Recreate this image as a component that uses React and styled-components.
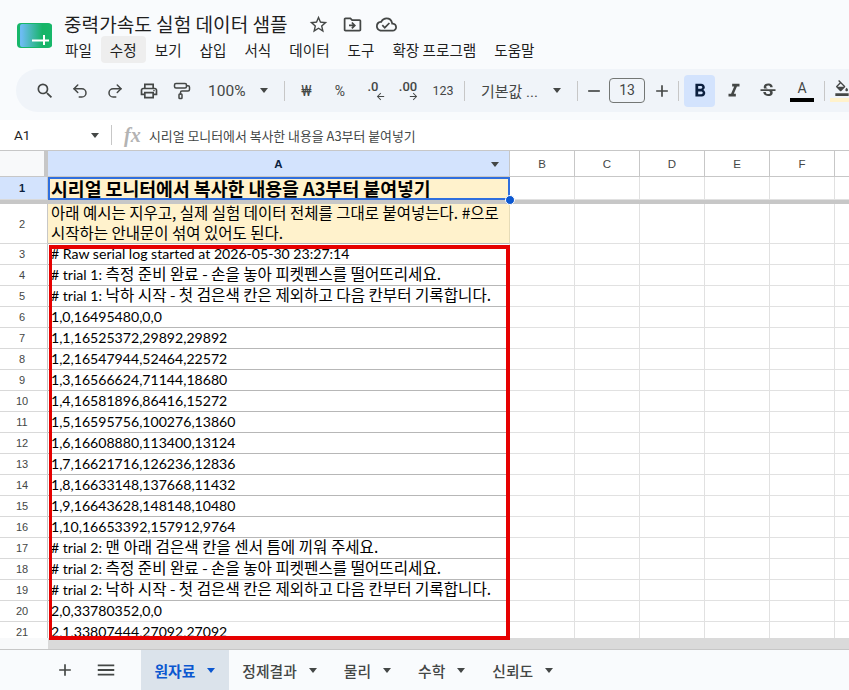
import React from "react";
import styled, { createGlobalStyle } from "styled-components";
import {
  MdSearch,
  MdOutlineLocalPrintshop,
  MdStarBorder,
  MdOutlineDriveFileMove,
  MdOutlineCloudDone,
  MdAdd,
  MdRemove,
  MdMenu,
  MdFormatBold,
  MdFormatItalic,
  MdStrikethroughS,
  MdFormatColorFill,
  MdArrowBack,
  MdArrowForward,
} from "react-icons/md";
import { Undo2, Redo2, PaintRoller } from "lucide-react";

const GlobalStyle = createGlobalStyle`
  html, body {
    margin: 0;
    padding: 0;
    height: 100%;
    overflow: hidden;
    background: #f9fbfd;
  }
  body {
    font-family: "Noto Sans CJK KR", "Noto Sans", sans-serif;
    color: #1f1f1f;
  }
`;

const Page = styled.div`
  width: 849px;
  height: 690px;
  display: flex;
  flex-direction: column;
  overflow: hidden;
`;

const Header = styled.header`
  height: 69px;
  display: flex;
  align-items: flex-start;
  padding: 12px 0 0 17px;
  box-sizing: border-box;
`;

const Logo = styled.svg`
  width: 35px;
  height: 26px;
  margin-top: 11px;
  flex: none;
`;

const TitleBlock = styled.div`
  margin-left: 12px;
  display: flex;
  flex-direction: column;
`;

const TitleRow = styled.div`
  height: 24px;
  display: flex;
  align-items: center;
`;

const DocTitle = styled.div`
  font-size: 19.1px;
  line-height: 24px;
  color: #1f1f1f;
  width: 224px;
  white-space: nowrap;
`;

const TitleIcons = styled.div`
  display: flex;
  align-items: center;
  gap: 13px;
  margin-left: 20px;
  color: #444746;
  font-size: 21px;
  svg {
    display: block;
  }
`;

const MenuBar = styled.nav`
  display: flex;
  margin: 0 0 0 -8px;
`;

const MenuItem = styled.div`
  height: 27px;
  line-height: 27px;
  padding: 0 9px;
  font-size: 14.6px;
  border-radius: 4px;
  white-space: nowrap;
  color: #1f1f1f;
  background: ${({ $active }) => ($active ? "#eeeeee" : "transparent")};
`;

const Toolbar = styled.div`
  height: 43px;
  margin-left: 16px;
  background: #f0f4f9;
  border-radius: 22px 0 0 22px;
  display: flex;
  align-items: center;
  padding-left: 12px;
  color: #444746;
`;

const ToolSlot = styled.div`
  width: ${({ $w }) => $w}px;
  height: 32px;
  flex: none;
  display: flex;
  align-items: center;
  justify-content: ${({ $start }) => ($start ? "flex-start" : "center")};
  padding-left: ${({ $pad }) => $pad || 0}px;
  margin-left: ${({ $ml }) => $ml || 0}px;
  box-sizing: border-box;
  font-size: ${({ $fs }) => $fs || 20}px;
  color: ${({ $on }) => ($on ? "#0b1f3f" : "#444746")};
  border-radius: 4px;
  background: ${({ $on }) => ($on ? "#d3e3fd" : "transparent")};
  svg {
    display: block;
    flex: none;
  }
`;

const ToolText = styled.span`
  font-family: Roboto, "Noto Sans CJK KR", sans-serif;
  font-size: ${({ $fs }) => $fs || 14}px;
  white-space: nowrap;
  color: #444746;
`;

const Divider = styled.div`
  width: 1px;
  height: 20px;
  flex: none;
  background: #c7c7c7;
  margin: 0 ${({ $r }) => $r || 0}px 0 ${({ $l }) => $l || 0}px;
`;

const Caret = styled.span`
  display: inline-block;
  flex: none;
  width: 0;
  height: 0;
  border-left: 4.5px solid transparent;
  border-right: 4.5px solid transparent;
  border-top: 5px solid ${({ $color }) => $color || "#444746"};
  margin-left: ${({ $l }) => $l || 0}px;
`;

const DecimalIcon = styled.div`
  position: relative;
  width: 24px;
  height: 24px;
  font-family: Roboto, sans-serif;
  font-size: 13px;
  font-weight: 500;
  line-height: 16px;
  text-align: center;
  color: #444746;
  svg {
    position: absolute;
    bottom: 1px;
    right: ${({ $right }) => ($right ? 1 : -1)}px;
  }
`;

const SizeBox = styled.div`
  width: 36px;
  height: 25px;
  margin-left: -1px;
  margin-right: 1px;
  border: 1px solid #747775;
  border-radius: 4px;
  box-sizing: border-box;
  font-family: Roboto, sans-serif;
  font-size: 14px;
  line-height: 23px;
  text-align: center;
  color: #444746;
  flex: none;
`;

const TextColor = styled.div`
  width: 24px;
  display: flex;
  flex-direction: column;
  align-items: center;
  font-family: Roboto, sans-serif;
  font-size: 14px;
  line-height: 16px;
  color: #444746;
`;

const ColorBar = styled.div`
  width: 24px;
  height: 4px;
  margin-top: 2px;
  background: ${({ $color }) => $color};
`;

const FormulaBar = styled.div`
  height: 39px;
  padding-top: 8px;
  box-sizing: border-box;
  background: #f9fbfd;
`;

const FormulaInner = styled.div`
  height: 31px;
  background: #fff;
  display: flex;
  align-items: center;
  border-bottom: 1px solid #c7c7c7;
  box-sizing: border-box;
  padding-left: 14px;
`;

const CellRef = styled.div`
  width: 77px;
  font-family: Roboto, sans-serif;
  font-size: 13.5px;
  color: #1f1f1f;
`;

const FxMark = styled.span`
  font-family: "Liberation Serif", serif;
  font-style: italic;
  font-weight: 700;
  font-size: 20px;
  line-height: 24px;
  color: #b3b3b3;
  width: 25px;
  margin-left: 12px;
`;

const FormulaText = styled.div`
  font-size: 12.9px;
  color: #444746;
  white-space: nowrap;
`;

const Sheet = styled.div`
  position: relative;
  flex: 1;
  min-height: 0;
  background: #fff;
  overflow: hidden;
`;

const Row = styled.div`
  display: flex;
  height: ${({ $h }) => $h}px;
  box-sizing: border-box;
`;

const Corner = styled.div`
  width: 48px;
  flex: none;
  box-sizing: border-box;
  background: #f8f9fa;
  border-right: 4px solid #c7c7c7;
  border-bottom: 1px solid #c7c7c7;
`;

const ColHead = styled.div`
  width: ${({ $w }) => $w}px;
  flex: none;
  box-sizing: border-box;
  position: relative;
  display: flex;
  align-items: center;
  justify-content: center;
  font-family: "Liberation Sans", sans-serif;
  font-size: 11.5px;
  font-weight: ${({ $on }) => ($on ? 700 : 400)};
  color: ${({ $on }) => ($on ? "#0b1f3f" : "#444746")};
  background: ${({ $on }) => ($on ? "#d3e3fd" : "#fff")};
  border-right: 1px solid #c7c7c7;
  border-bottom: 1px solid #c7c7c7;
`;

const HeadCaret = styled.span`
  position: absolute;
  right: 10px;
  top: 11px;
  width: 0;
  height: 0;
  border-left: 4px solid transparent;
  border-right: 4px solid transparent;
  border-top: 5px solid #444746;
`;

const RowHead = styled.div`
  width: 48px;
  flex: none;
  box-sizing: border-box;
  display: flex;
  align-items: center;
  justify-content: center;
  padding-right: 3px;
  font-family: "Liberation Sans", sans-serif;
  font-size: 11px;
  font-weight: ${({ $on }) => ($on ? 700 : 400)};
  color: ${({ $on }) => ($on ? "#0b1f3f" : "#444746")};
  background: ${({ $on }) => ($on ? "#d3e3fd" : "#fff")};
  border-right: 1px solid #c7c7c7;
  border-bottom: 1px solid #d9d9d9;
`;

const MainCell = styled.div`
  width: 462px;
  flex: none;
  box-sizing: border-box;
  padding: 0 3px;
  white-space: ${({ $wrap }) => ($wrap ? "normal" : "nowrap")};
  word-break: keep-all;
  font-size: ${({ $fs }) => $fs || 15.5}px;
  font-weight: ${({ $bold }) => ($bold ? 700 : 400)};
  line-height: ${({ $lh }) => $lh || 20}px;
  color: #000;
  background: ${({ $fill }) => ($fill ? "#fff2cc" : "#fff")};
  border-right: 1px solid ${({ $fill }) => ($fill ? "#e6dcb8" : "#e1e1e1")};
  border-bottom: 1px solid ${({ $line }) => $line || "#b7b7b7"};
`;

const WrapText = styled.div`
  margin-top: -2px;
`;

// log lines: latin part is narrow, hangul part is larger, like the sheet's fallback font
const LogText = styled.span`
  font-family: Lato, "Noto Sans CJK KR", sans-serif;
  font-size: 14.1px;
`;

const Han = styled.span`
  font-family: "Noto Sans CJK KR", sans-serif;
  font-size: 15.6px;
`;

const BlankCell = styled.div`
  width: 65px;
  flex: none;
  box-sizing: border-box;
  border-right: 1px solid #e1e1e1;
  border-bottom: 1px solid #e1e1e1;
`;

const Freeze = styled.div`
  height: 4px;
  background: #c7c7c7;
`;

const Selection = styled.div`
  position: absolute;
  left: 48px;
  top: 26px;
  width: 462px;
  height: 23px;
  box-sizing: border-box;
  border: 2px solid #2f6fde;
  pointer-events: none;
`;

const Handle = styled.div`
  position: absolute;
  left: 505px;
  top: 44px;
  width: 10px;
  height: 10px;
  box-sizing: border-box;
  border-radius: 50%;
  background: #0b57d0;
  border: 1px solid #fff;
`;

const RedBox = styled.div`
  position: absolute;
  left: 49px;
  top: 94px;
  width: 461px;
  height: 395px;
  box-sizing: border-box;
  border: 4px solid #e60000;
  border-left-width: 3px;
  pointer-events: none;
`;

const ScrollTrack = styled.div`
  position: absolute;
  left: 0;
  right: 0;
  bottom: 0;
  height: 11px;
  background: #f8f9fa;
  display: flex;
  border-bottom: 1px solid #c7c7c7;
`;

const ScrollThumb = styled.div`
  flex: 1;
  margin-left: 48px;
  background: #dadada;
`;

const TabBar = styled.div`
  height: 40px;
  flex: none;
  background: #f9fbfd;
  display: flex;
  align-items: stretch;
  padding-left: 55px;
  color: #444746;
`;

const TabIcon = styled.div`
  width: ${({ $w }) => $w}px;
  flex: none;
  margin-right: ${({ $mr }) => $mr || 0}px;
  display: flex;
  align-items: center;
  justify-content: center;
  font-size: 20px;
`;

const Tab = styled.div`
  flex: none;
  box-sizing: border-box;
  display: flex;
  align-items: center;
  padding: 0 13.5px;
  font-size: 14.8px;
  white-space: nowrap;
  font-weight: ${({ $on }) => ($on ? 700 : 500)};
  color: ${({ $on }) => ($on ? "#0b57d0" : "#444746")};
  background: ${({ $on }) => ($on ? "#dbe3eb" : "transparent")};
`;

const MENU = ["파일", "수정", "보기", "삽입", "서식", "데이터", "도구", "확장 프로그램", "도움말"];

const TABS = ["원자료", "정제결과", "물리", "수학", "신뢰도"];

const DATA = [
  "# Raw serial log started at 2026-05-30 23:27:14",
  "# trial 1: 측정 준비 완료 - 손을 놓아 피켓펜스를 떨어뜨리세요.",
  "# trial 1: 낙하 시작 - 첫 검은색 칸은 제외하고 다음 칸부터 기록합니다.",
  "1,0,16495480,0,0",
  "1,1,16525372,29892,29892",
  "1,2,16547944,52464,22572",
  "1,3,16566624,71144,18680",
  "1,4,16581896,86416,15272",
  "1,5,16595756,100276,13860",
  "1,6,16608880,113400,13124",
  "1,7,16621716,126236,12836",
  "1,8,16633148,137668,11432",
  "1,9,16643628,148148,10480",
  "1,10,16653392,157912,9764",
  "# trial 2: 맨 아래 검은색 칸을 센서 틈에 끼워 주세요.",
  "# trial 2: 측정 준비 완료 - 손을 놓아 피켓펜스를 떨어뜨리세요.",
  "# trial 2: 낙하 시작 - 첫 검은색 칸은 제외하고 다음 칸부터 기록합니다.",
  "2,0,33780352,0,0",
  "2,1,33807444,27092,27092",
];

const Blanks = () => (
  <>
    {[0, 1, 2, 3, 4, 5].map((i) => (
      <BlankCell key={i} />
    ))}
  </>
);

const LogLine = ({ text }) => {
  const at = text.search(/[가-힣]/);
  if (at < 0) return <LogText>{text}</LogText>;
  return (
    <LogText>
      {text.slice(0, at)}
      <Han>{text.slice(at)}</Han>
    </LogText>
  );
};

const Top = () => (
  <>
    <Header>
      <Logo viewBox="0 0 35 26">
        <defs>
          <linearGradient id="logoFill" x1="0" x2="1" y1="0" y2="0">
            <stop offset="0.05" stopColor="#6cbcf2" />
            <stop offset="0.7" stopColor="#17b467" />
            <stop offset="1" stopColor="#17b76a" />
          </linearGradient>
        </defs>
        <rect x="0" y="0" width="35" height="25" rx="4" fill="#17b76a" />
        <rect x="3" y="1" width="32" height="23" rx="2" fill="url(#logoFill)" />
        <path d="M15 17.5H32M27 12V22" stroke="#fff" strokeWidth="2" fill="none" />
      </Logo>
      <TitleBlock>
        <TitleRow>
          <DocTitle>중력가속도 실험 데이터 샘플</DocTitle>
          <TitleIcons>
            <MdStarBorder />
            <MdOutlineDriveFileMove />
            <MdOutlineCloudDone />
          </TitleIcons>
        </TitleRow>
        <MenuBar>
          {MENU.map((m) => (
            <MenuItem key={m} $active={m === "수정"}>
              {m}
            </MenuItem>
          ))}
        </MenuBar>
      </TitleBlock>
    </Header>
    <Toolbar>
      <ToolSlot $w={34}><MdSearch /></ToolSlot>
      <ToolSlot $w={36}><Undo2 size={18} strokeWidth={2} /></ToolSlot>
      <ToolSlot $w={34}><Redo2 size={18} strokeWidth={2} /></ToolSlot>
      <ToolSlot $w={34}><MdOutlineLocalPrintshop /></ToolSlot>
      <ToolSlot $w={32}><PaintRoller size={18} strokeWidth={2} /></ToolSlot>
      <ToolSlot $w={74} $start $pad={10}>
        <ToolText $fs={15.5}>100%</ToolText>
        <Caret $l={14} />
      </ToolSlot>
      <Divider $l={12} />
      <ToolSlot $w={43}><ToolText $fs={14}>₩</ToolText></ToolSlot>
      <ToolSlot $w={24}><ToolText $fs={14}>%</ToolText></ToolSlot>
      <ToolSlot $w={42}>
        <DecimalIcon>.0<MdArrowBack size={11} /></DecimalIcon>
      </ToolSlot>
      <ToolSlot $w={28}>
        <DecimalIcon $right>.00<MdArrowForward size={11} /></DecimalIcon>
      </ToolSlot>
      <ToolSlot $w={42}><ToolText $fs={12.5}>123</ToolText></ToolSlot>
      <Divider />
      <ToolSlot $w={112} $start $pad={16}>
        <ToolText $fs={15}>기본값 ...</ToolText>
        <Caret $l={15} />
      </ToolSlot>
      <Divider />
      <ToolSlot $w={32}><MdRemove /></ToolSlot>
      <SizeBox>13</SizeBox>
      <ToolSlot $w={32}><MdAdd /></ToolSlot>
      <Divider />
      <ToolSlot $w={31} $ml={5} $on><MdFormatBold size={22} /></ToolSlot>
      <ToolSlot $w={35} $ml={1}><MdFormatItalic size={22} /></ToolSlot>
      <ToolSlot $w={34}><MdStrikethroughS /></ToolSlot>
      <ToolSlot $w={34}>
        <TextColor>A<ColorBar $color="#000" /></TextColor>
      </ToolSlot>
      <Divider $l={5} />
      <ToolSlot $w={34}>
        <TextColor><MdFormatColorFill size={16} /><ColorBar $color="#fff2cc" /></TextColor>
      </ToolSlot>
    </Toolbar>
    <FormulaBar>
      <FormulaInner>
        <CellRef>A1</CellRef>
        <Caret />
        <Divider $l={12} />
        <FxMark>fx</FxMark>
        <FormulaText>시리얼 모니터에서 복사한 내용을 A3부터 붙여넣기</FormulaText>
      </FormulaInner>
    </FormulaBar>
  </>
);

const Grid = () => (
  <Sheet>
    <Row $h={26}>
      <Corner />
      <ColHead $w={462} $on>A<HeadCaret /></ColHead>
      {["B", "C", "D", "E", "F", ""].map((c) => (
        <ColHead key={c} $w={65}>{c}</ColHead>
      ))}
    </Row>
    <Row $h={23}>
      <RowHead $on>1</RowHead>
      <MainCell $fill $bold $fs={18.3} $lh={22}>시리얼 모니터에서 복사한 내용을 A3부터 붙여넣기</MainCell>
      <Blanks />
    </Row>
    <Freeze />
    <Row $h={40}>
      <RowHead>2</RowHead>
      <MainCell $fill $wrap $lh={20}>
        <WrapText>
          아래 예시는 지우고, 실제 실험 데이터 전체를 그대로 붙여넣는다. #으로 시작하는 안내문이 섞여 있어도 된다.
        </WrapText>
      </MainCell>
      <Blanks />
    </Row>
    {DATA.map((line, i) => (
      <Row key={i} $h={21}>
        <RowHead>{i + 3}</RowHead>
        <MainCell $lh={16} $line={i >= 17 ? "#e1e1e1" : undefined}>
          <LogLine text={line} />
        </MainCell>
        <Blanks />
      </Row>
    ))}
    <Selection />
    <Handle />
    <ScrollTrack>
      <ScrollThumb />
    </ScrollTrack>
    <RedBox />
  </Sheet>
);

const Tabs = () => (
  <TabBar>
    <TabIcon $w={20}><MdAdd /></TabIcon>
    <TabIcon $w={62} $mr={4}><MdMenu size={22} /></TabIcon>
    {TABS.map((t, i) => (
      <Tab key={t} $on={i === 0}>
        {t}
        <Caret $l={12} $color={i === 0 ? "#0b57d0" : "#444746"} />
      </Tab>
    ))}
  </TabBar>
);

export default function App() {
  return (
    <Page>
      <GlobalStyle />
      <Top />
      <Grid />
      <Tabs />
    </Page>
  );
}
